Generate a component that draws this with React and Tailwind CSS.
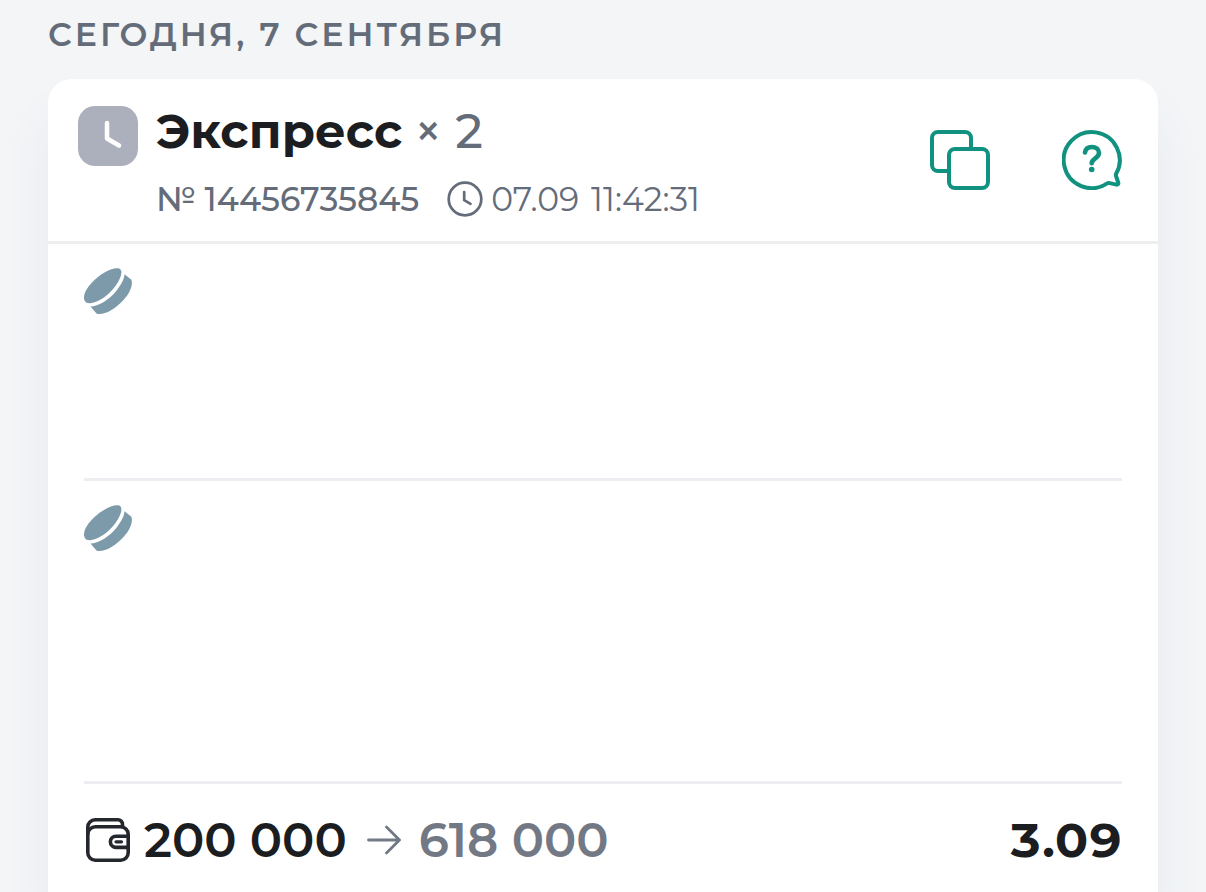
const ROWS = [
  { id: 1, height: 'min-h-[237px]' },
  { id: 2, height: 'min-h-[303px]' },
]

/* ── Icons ── */
function PendingIcon() {
  return (
    <svg width="60" height="60" viewBox="0 0 60 60" fill="none" className="shrink-0" role="img" aria-label="В ожидании">
      <rect width="60" height="60" rx="17" fill="#abb0bc" />
      <path d="M29 17v15.500l12 7" stroke="white" strokeWidth="4.500" strokeLinecap="round" strokeLinejoin="round" />
    </svg>
  )
}

function ClockIcon() {
  return (
    <svg width="36" height="36" viewBox="0 0 36 36" fill="none" stroke="currentColor" strokeWidth="2.700" strokeLinecap="round" strokeLinejoin="round" className="shrink-0">
      <circle cx="18" cy="18" r="16.300" />
      <path d="M17.200 11v8.200l6.300 3.600" />
    </svg>
  )
}

function CopyIcon() {
  return (
    <svg width="60" height="60" viewBox="0 0 60 60" fill="none" stroke="currentColor" strokeWidth="4">
      <path d="M18 41H8a6 6 0 0 1-6-6V8a6 6 0 0 1 6-6h27a6 6 0 0 1 6 6v10" />
      <rect x="19" y="19" width="39" height="39" rx="6" />
    </svg>
  )
}

function HelpIcon() {
  return (
    <svg width="60" height="60" viewBox="0 0 60 60" fill="none" stroke="currentColor" strokeWidth="4" strokeLinecap="round" strokeLinejoin="round">
      <path d="M54 44A28 28 0 1 0 45.200 53.400c.8-.5 1.700-.6 2.600-.3l6.800 1.500c1.100.3 2-.7 1.700-1.800l-2.100-6.300c-.3-.9-.4-1.700-.2-2.500Z" />
      <path d="M23 22.500c.6-4 3.200-5.500 6.800-5.500 4.100 0 7.200 2.200 7.200 6 0 5-7.300 5.500-7.300 10.200" strokeWidth="4.600" />
      <circle cx="29.700" cy="39.500" r="2.800" fill="currentColor" stroke="none" />
    </svg>
  )
}

function PuckIcon() {
  return (
    <svg width="48" height="48" viewBox="0 0 48 48" fill="#7c9aaa">
      <path d="M35.700 1.800C30 -.500 17 6 8 15.500 1 23 -1.700 30 1 34.200 2.200 36 4.500 36.500 7.500 36 15.500 34.600 25.500 27.500 31.500 19 36 12.600 38.500 6 36.900 3Z" />
      <path d="M40.500 7.300 47.400 12.800c1.800 5.200-1.400 13.200-7.900 20.200C30.500 42.900 18.500 49 12.500 46.600L6.500 39.600C14.500 39.400 25.500 32.500 32.500 23.700 37 18 40.400 12 40.500 7.300Z" />
    </svg>
  )
}

function WalletIcon() {
  return (
    <svg width="44" height="44" viewBox="0 0 44 44" fill="none" stroke="#24272c" strokeWidth="3.600" strokeLinecap="round" strokeLinejoin="round" className="shrink-0">
      <rect x="1.800" y="8.800" width="40.400" height="33.400" rx="7.500" />
      <path d="M1.800 16V9a7.200 7.200 0 0 1 7.200-7.200h23a4.500 4.500 0 0 1 4.500 4.500v2.500" />
      <path d="M42 18.200H30a5.600 5.600 0 0 0 0 11.200h12" />
      <path d="M30 23.800h5.500" strokeWidth="3.200" />
    </svg>
  )
}

function ArrowIcon() {
  return (
    <svg width="34" height="30" viewBox="0 0 34 30" fill="none" stroke="currentColor" strokeWidth="2.800" strokeLinecap="round" strokeLinejoin="round" className="shrink-0">
      <path d="M1.500 15h31M19.500 2l13 13-13 13" />
    </svg>
  )
}

/* ── Card header ── */
function BetHeader() {
  return (
    <header className="flex items-center justify-between border-b-3 border-[#eceef0] pt-5 pb-[21px] pr-9 pl-[30px]">
      <div className="flex items-start gap-[18px] pt-[7px]">
        <PendingIcon />
        <div>
          <h2 className="flex items-baseline gap-3 text-5xl leading-[50px] font-bold text-[#1b1d21]">
            Экспресс
            <span className="font-medium text-[#656c79]">× 2</span>
          </h2>
          <div className="mt-[23px] flex items-center gap-7 pb-px text-[33px] leading-10 text-[#656c79]">
            <span className="font-medium">№ 14456735845</span>
            <span className="flex items-center gap-2">
              <ClockIcon />
              <time className="flex gap-3">
                <span>07.09</span>
                <span>11:42:31</span>
              </time>
            </span>
          </div>
        </div>
      </div>
      <div className="flex shrink-0 gap-[72px] text-[#11917f]">
        <button type="button" aria-label="Копировать"><CopyIcon /></button>
        <button type="button" aria-label="Помощь"><HelpIcon /></button>
      </div>
    </header>
  )
}

/* ── Page ── */
export default function App() {
  return (
    <div className="flex min-h-screen flex-col bg-[#f3f5f7] px-12 pt-3.5 font-['Montserrat','Inter',sans-serif]">
      <h1 className="text-[33px] leading-10 font-semibold tracking-[3px] text-[#656c79] uppercase">Сегодня, 7 сентября</h1>
      <main className="mt-[25px] flex flex-1 flex-col rounded-t-3xl bg-white shadow-[0_36px_48px_rgba(80,100,140,0.07)]">
        <BetHeader />
        <ul className="px-9">
          {ROWS.map((row) => (
            <li key={row.id} className={`${row.height} border-b-3 border-[#eceef1] pt-[23px]`}>
              <PuckIcon />
            </li>
          ))}
        </ul>
        <footer className="flex items-center justify-between px-9 pt-[30px] pb-6 text-5xl leading-[52px] text-[#1b1d21]">
          <div className="flex items-center gap-5 pl-0.5 font-semibold">
            <span className="flex items-center gap-3.5">
              <WalletIcon />
              200 000
            </span>
            <span className="flex items-center gap-[18px] text-[#727985]">
              <ArrowIcon />
              618 000
            </span>
          </div>
          <strong className="font-bold tabular-nums">3.09</strong>
        </footer>
      </main>
    </div>
  )
}
